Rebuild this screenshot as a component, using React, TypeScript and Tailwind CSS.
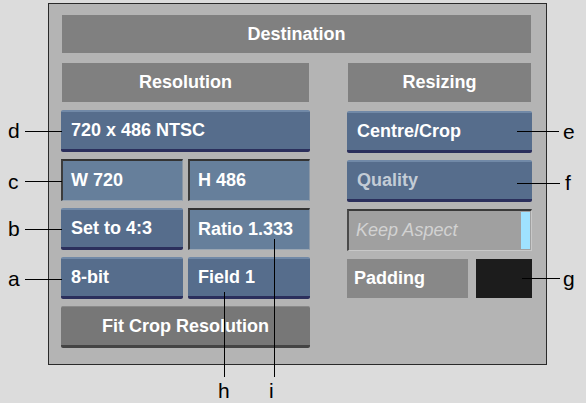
const FONT = { fontFamily: '"Liberation Sans", Arial, sans-serif' };

function Header({ label, className = "" }: { label: string; className?: string }) {
  return (
    <div
      className={`flex h-[39px] items-center justify-center bg-[#808080] text-[18px] font-bold text-white ${className}`}
    >
      {label}
    </div>
  );
}

function RaisedButton({ label, dim = false }: { label: string; dim?: boolean }) {
  return (
    <div
      className={`flex h-[42px] items-center rounded-[2px] border-t-2 border-b-[3px] border-t-[#7189a7] border-b-[#2b2f5c] bg-[#566d8c] pl-[10px] text-[18px] font-bold ${
        dim ? "text-[#c3ccd6]" : "text-white"
      }`}
    >
      {label}
    </div>
  );
}

function Field({ label }: { label: string }) {
  return (
    <div className="flex h-[42px] items-center border-t-2 border-l-2 border-r border-b border-t-[#333] border-l-[#3c3c3c] border-r-[#8a97a6] border-b-[#9aa6b3] bg-[#667f9b] pl-[8px] text-[18px] font-bold text-white">
      {label}
    </div>
  );
}

function Callout({
  letter,
  x,
  y,
}: {
  letter: string;
  x: number;
  y: number;
}) {
  return (
    <span
      className="absolute text-[21px] leading-none text-black"
      style={{ left: x, top: y }}
    >
      {letter}
    </span>
  );
}

export default function App() {
  return (
    <div className="relative h-[403px] w-[586px] overflow-hidden bg-[#dcdcdc]" style={FONT}>
      <div className="ml-[48px] mt-[3px] h-[362px] w-[499px] border border-[#2a2a2a] bg-[#b4b4b4] pl-[12px] pt-[11px]">
        <div className="ml-px flex h-[38px] w-[469px] items-center justify-center bg-[#808080] text-[18px] font-bold text-white">
          Destination
        </div>

        <div className="mt-[10px] flex gap-[37px]">
          {/* Resolution column */}
          <div className="flex w-[249px] flex-col">
            <Header label="Resolution" className="ml-px w-[247px]" />
            <div className="mt-[8px] flex flex-col gap-[7px]">
              <RaisedButton label="720 x 486 NTSC" />
              <div className="grid grid-cols-2 gap-[5px]">
                <Field label="W 720" />
                <Field label="H 486" />
              </div>
              <div className="grid grid-cols-2 gap-[5px]">
                <RaisedButton label="Set to 4:3" />
                <Field label="Ratio 1.333" />
              </div>
              <div className="grid grid-cols-2 gap-[5px]">
                <RaisedButton label="8-bit" />
                <RaisedButton label="Field 1" />
              </div>
              <div className="flex h-[42px] items-center justify-center rounded-[2px] border-t border-b-[3px] border-t-[#8a8a8a] border-b-[#444] bg-[#777] text-[18px] font-bold text-white">
                Fit Crop Resolution
              </div>
            </div>
          </div>

          {/* Resizing column */}
          <div className="flex w-[185px] flex-col">
            <Header label="Resizing" className="ml-px w-[183px]" />
            <div className="mt-[9px] flex flex-col gap-[7px]">
              <RaisedButton label="Centre/Crop" />
              <RaisedButton label="Quality" dim />
              <div className="flex h-[42px] border-t-2 border-l-2 border-r border-b border-t-[#3a3a3a] border-l-[#4a4a4a] border-r-[#c8c8c8] border-b-[#c8c8c8] bg-[#a0a0a0]">
                <span className="flex flex-1 items-center pl-[7px] text-[18px] italic text-[#d2d2d2]">
                  Keep Aspect
                </span>
                <span className="my-[1px] mr-[1px] w-[9px] bg-[#9fe2ff]" />
              </div>
              <div className="flex h-[40px] gap-[8px] pt-[1px]">
                <span className="flex flex-1 items-center bg-[#888] pl-[7px] text-[18px] font-bold text-white">
                  Padding
                </span>
                <span className="w-[56px] bg-[#1c1c1c]" />
              </div>
            </div>
          </div>
        </div>
      </div>

      {/* callout lines */}
      <div className="absolute left-[25px] top-[131px] h-px w-[37px] bg-black" />
      <div className="absolute left-[25px] top-[181px] h-px w-[37px] bg-black" />
      <div className="absolute left-[25px] top-[229px] h-px w-[37px] bg-black" />
      <div className="absolute left-[25px] top-[279px] h-px w-[37px] bg-black" />
      <div className="absolute left-[517px] top-[131px] h-px w-[42px] bg-black" />
      <div className="absolute left-[517px] top-[183px] h-px w-[43px] bg-black" />
      <div className="absolute left-[522px] top-[278px] h-px w-[38px] bg-black" />
      <div className="absolute left-[224px] top-[292px] h-[85px] w-px bg-black" />
      <div className="absolute left-[274px] top-[239px] h-[138px] w-px bg-black" />

      <Callout letter="d" x={8} y={120} />
      <Callout letter="c" x={8} y={171} />
      <Callout letter="b" x={8} y={218} />
      <Callout letter="a" x={8} y={268} />
      <Callout letter="e" x={563} y={121} />
      <Callout letter="f" x={565} y={172} />
      <Callout letter="g" x={563} y={268} />
      <Callout letter="h" x={218} y={380} />
      <Callout letter="i" x={269} y={380} />
    </div>
  );
}
